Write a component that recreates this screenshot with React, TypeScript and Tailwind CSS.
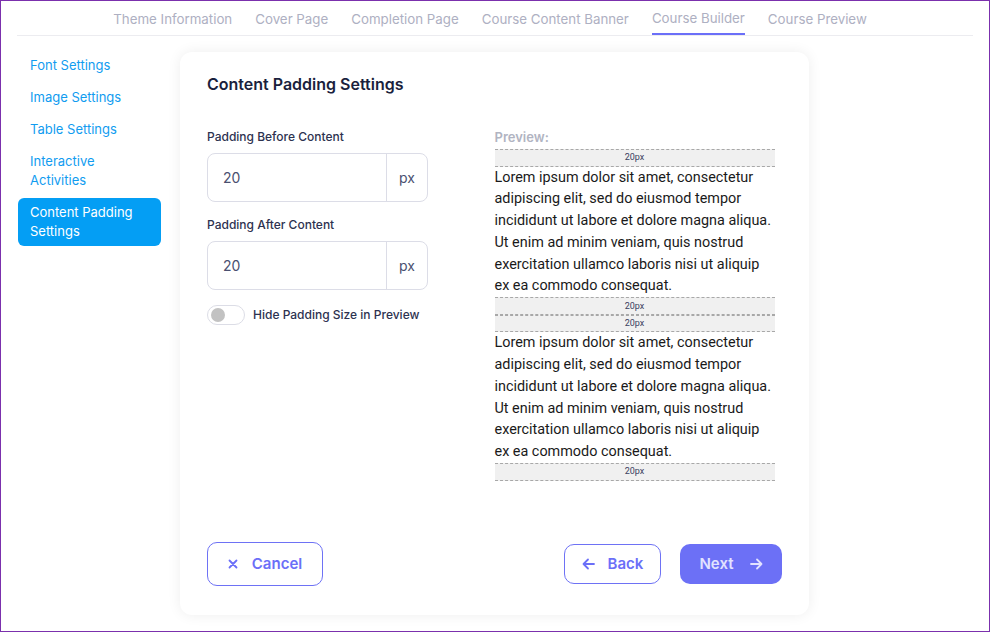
import { useState } from "react";

const tabs = [
  "Theme Information",
  "Cover Page",
  "Completion Page",
  "Course Content Banner",
  "Course Builder",
  "Course Preview",
];

const sideItems = [
  "Font Settings",
  "Image Settings",
  "Table Settings",
  "Interactive Activities",
  "Content Padding Settings",
];

const lorem =
  "Lorem ipsum dolor sit amet, consectetur adipiscing elit, sed do eiusmod tempor incididunt ut labore et dolore magna aliqua. Ut enim ad minim veniam, quis nostrud exercitation ullamco laboris nisi ut aliquip ex ea commodo consequat.";

// dashed box that shows the padding size
const PadBox = ({ size, show }: { size: number; show: boolean }) => (
  <div className="flex h-[17.5px] items-center justify-center border-y border-dashed border-[#a8a8a8] bg-[#f0f0f0] text-[9px] leading-none text-[#3b4060] font-['Roboto',sans-serif]">
    {show ? `${size}px` : ""}
  </div>
);

const PxInput = ({ value, onChange }: { value: number; onChange: (v: number) => void }) => (
  <div className="flex h-[49px] w-[221px] overflow-hidden rounded-lg border border-[#dcdde7]">
    <input
      value={value}
      onChange={(e) => onChange(Number(e.target.value) || 0)}
      className="min-w-0 flex-1 pl-[15px] text-[14px] text-[#4a5070] outline-none"
    />
    <div className="flex w-[41px] items-center justify-center border-l border-[#dcdde7] text-[14px] text-[#4a5070]">
      px
    </div>
  </div>
);

export default function App() {
  const [before, setBefore] = useState(20);
  const [after, setAfter] = useState(20);
  const [hideSize, setHideSize] = useState(false);

  return (
    <div className="h-[632px] w-[990px] overflow-hidden border border-[#7b30ad] bg-white font-['Inter',sans-serif]">
      {/* top tabs */}
      <div className="mx-[16px] flex h-[35px] justify-center gap-[23px] border-b border-[#ececf0] pr-[10px]">
        {tabs.map((t) => (
          <div
            key={t}
            className={`flex h-full items-center pt-[4px] text-[13.3px] text-[#aeb0c2] ${
              t === "Course Builder" ? "border-b-2 border-[#6b6ff8] mb-[-2px]" : ""
            }`}
          >
            {t}
          </div>
        ))}
      </div>

      <div className="flex gap-[19px] pl-[17px] pt-[16px]">
        {/* sidebar */}
        <div className="flex w-[143px] flex-col gap-[3px] mt-[-1px]">
          {sideItems.map((s) => {
            const active = s === "Content Padding Settings";
            return (
              <div
                key={s}
                className={`rounded-md px-3 py-[5px] text-[13px] leading-[19px] ${
                  active ? "bg-[#049ef4] text-white" : "text-[#119cf0]"
                }`}
              >
                {s}
              </div>
            );
          })}
        </div>

        {/* card */}
        <div className="flex h-[563px] w-[629px] flex-col rounded-xl bg-white px-[27px] pt-[20px] pb-[29px] shadow-[0_0_14px_rgba(0,0,0,0.07)]">
          <h2 className="text-[16px] font-semibold leading-6 text-[#1a1f3d]">Content Padding Settings</h2>

          <div className="mt-[32px] grid grid-cols-2">
            <div className="flex flex-col">
              <label className="text-[12px] font-medium leading-[18px] text-[#2d3250]">Padding Before Content</label>
              <div className="mt-[7px]">
                <PxInput value={before} onChange={setBefore} />
              </div>
              <label className="mt-[14px] text-[12px] font-medium leading-[18px] text-[#2d3250]">
                Padding After Content
              </label>
              <div className="mt-[7px]">
                <PxInput value={after} onChange={setAfter} />
              </div>
              <div className="mt-[15px] flex items-center gap-[8px]">
                <button
                  type="button"
                  onClick={() => setHideSize(!hideSize)}
                  className={`flex h-[20px] w-[38px] items-center rounded-full border px-[3px] ${
                    hideSize ? "justify-end border-[#6b6ff8] bg-[#6b6ff8]" : "border-[#dcdde6] bg-white"
                  }`}
                >
                  <span className={`h-[14px] w-[14px] rounded-full ${hideSize ? "bg-white" : "bg-[#c2c2c2]"}`} />
                </button>
                <span className="text-[12px] font-medium text-[#2d3250]">Hide Padding Size in Preview</span>
              </div>
            </div>

            <div className="w-[280px]">
              <div className="text-[13px] font-semibold leading-[18px] text-[#b1b4c2]">Preview:</div>
              <div className="mt-[3px] font-['Roboto',sans-serif]">
                <PadBox size={before} show={!hideSize} />
                <p className="text-[14.4px] leading-[21.8px] text-[#1a1a1a]">{lorem}</p>
                <PadBox size={after} show={!hideSize} />
                <PadBox size={before} show={!hideSize} />
                <p className="text-[14.4px] leading-[21.8px] text-[#1a1a1a]">{lorem}</p>
                <PadBox size={after} show={!hideSize} />
              </div>
            </div>
          </div>

          {/* footer buttons */}
          <div className="mt-auto flex items-center justify-between">
            <button
              type="button"
              className="flex h-[44px] w-[116px] items-center justify-center gap-[14px] rounded-[10px] border border-[#6e72f5] text-[15px] font-semibold text-[#6b6ff8]"
            >
              <svg width="10" height="10" viewBox="0 0 10 10" fill="none" stroke="currentColor" strokeWidth="1.8" strokeLinecap="round">
                <path d="M1.5 1.5l7 7M8.5 1.5l-7 7" />
              </svg>
              Cancel
            </button>
            <div className="flex gap-[19px]">
              <button
                type="button"
                className="flex h-[40px] w-[97px] items-center justify-center gap-[13px] rounded-[10px] border border-[#6e72f5] text-[15px] font-semibold text-[#6b6ff8]"
              >
                <svg width="13" height="12" viewBox="0 0 13 12" fill="none" stroke="currentColor" strokeWidth="1.8" strokeLinecap="round" strokeLinejoin="round">
                  <path d="M12 6H1.5M6 1.5L1.5 6 6 10.5" />
                </svg>
                Back
              </button>
              <button
                type="button"
                className="flex h-[40px] w-[102px] items-center justify-center gap-[16px] rounded-[10px] bg-[#6c70f6] text-[15px] font-semibold text-[#e2e2ff]"
              >
                Next
                <svg width="13" height="12" viewBox="0 0 13 12" fill="none" stroke="currentColor" strokeWidth="1.8" strokeLinecap="round" strokeLinejoin="round">
                  <path d="M1 6h10.5M7 1.5L11.5 6 7 10.5" />
                </svg>
              </button>
            </div>
          </div>
        </div>
      </div>
    </div>
  );
}
